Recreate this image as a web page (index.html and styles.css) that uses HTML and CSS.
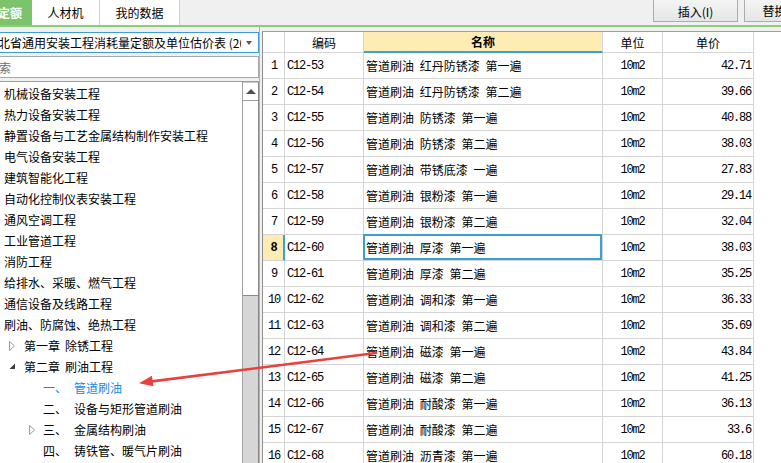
FILE: index.html
```html
<!DOCTYPE html>
<html lang="zh-CN">
<head>
<meta charset="utf-8">
<title>定额</title>
<link rel="stylesheet" href="styles.css">
</head>
<body>
<div class="app">
  <header class="topbar">
    <nav class="tabs">
      <div class="tab active">定额</div>
      <div class="tab tab-rcj">人材机</div>
      <div class="tab tab-my">我的数据</div>
    </nav>
    <div class="actions">
      <button class="btn btn-insert">插入(I)</button>
      <button class="btn btn-replace">替换</button>
    </div>
  </header>
  <main class="main">
    <aside class="left">
      <div class="select">
        <span class="select-text">湖北省通用安装工程消耗量定额及单位估价表 (2013)</span>
        <span class="caret"></span>
      </div>
      <div class="search"><span class="placeholder">搜索</span></div>
      <div class="tree-wrap">
        <ul class="tree">
          <li class="item">机械设备安装工程</li>
          <li class="item">热力设备安装工程</li>
          <li class="item">静置设备与工艺金属结构制作安装工程</li>
          <li class="item">电气设备安装工程</li>
          <li class="item">建筑智能化工程</li>
          <li class="item">自动化控制仪表安装工程</li>
          <li class="item">通风空调工程</li>
          <li class="item">工业管道工程</li>
          <li class="item">消防工程</li>
          <li class="item">给排水、采暖、燃气工程</li>
          <li class="item">通信设备及线路工程</li>
          <li class="item">刷油、防腐蚀、绝热工程</li>
          <li class="item lvl2"><span class="tg"><svg width="7" height="10" viewBox="0 0 7 10"><polygon points="0.5,0.5 5.5,5 0.5,9.5" fill="#fff" stroke="#9a9a9a"/></svg></span><span>第一章</span><span class="gap"></span><span>除锈工程</span></li>
          <li class="item lvl2"><span class="tg"><svg width="7" height="7" viewBox="0 0 7 7"><polygon points="6,0.5 6,6 0.5,6" fill="#3c3c3c"/></svg></span><span>第二章</span><span class="gap"></span><span>刷油工程</span></li>
          <li class="item lvl3 current"><span class="tg"></span><span class="no">一、</span><span>管道刷油</span></li>
          <li class="item lvl3"><span class="tg"></span><span class="no">二、</span><span>设备与矩形管道刷油</span></li>
          <li class="item lvl3"><span class="tg"><svg width="7" height="10" viewBox="0 0 7 10"><polygon points="0.5,0.5 5.5,5 0.5,9.5" fill="#fff" stroke="#9a9a9a"/></svg></span><span class="no">三、</span><span>金属结构刷油</span></li>
          <li class="item lvl3"><span class="tg"></span><span class="no">四、</span><span>铸铁管、暖气片刷油</span></li>
        </ul>
        <div class="scrollbar">
          <div class="sb-up"><span class="sb-arrow"></span></div>
          <div class="sb-thumb"></div>
          <div class="sb-track"></div>
        </div>
      </div>
    </aside>
    <div class="splitter"></div>
    <section class="grid">
      <div class="row head">
        <div class="c num"></div>
        <div class="c code h">编码</div>
        <div class="c name h sorted">名称</div>
        <div class="c unit h">单位</div>
        <div class="c price h">单价</div>
      </div>
      <div class="row"><div class="c num">1</div><div class="c code">C12-53</div><div class="c name">管道刷油 红丹防锈漆 第一遍</div><div class="c unit">10m2</div><div class="c price">42.71</div></div>
      <div class="row"><div class="c num">2</div><div class="c code">C12-54</div><div class="c name">管道刷油 红丹防锈漆 第二遍</div><div class="c unit">10m2</div><div class="c price">39.66</div></div>
      <div class="row"><div class="c num">3</div><div class="c code">C12-55</div><div class="c name">管道刷油 防锈漆 第一遍</div><div class="c unit">10m2</div><div class="c price">40.88</div></div>
      <div class="row"><div class="c num">4</div><div class="c code">C12-56</div><div class="c name">管道刷油 防锈漆 第二遍</div><div class="c unit">10m2</div><div class="c price">38.03</div></div>
      <div class="row"><div class="c num">5</div><div class="c code">C12-57</div><div class="c name">管道刷油 带锈底漆 一遍</div><div class="c unit">10m2</div><div class="c price">27.83</div></div>
      <div class="row"><div class="c num">6</div><div class="c code">C12-58</div><div class="c name">管道刷油 银粉漆 第一遍</div><div class="c unit">10m2</div><div class="c price">29.14</div></div>
      <div class="row"><div class="c num">7</div><div class="c code">C12-59</div><div class="c name">管道刷油 银粉漆 第二遍</div><div class="c unit">10m2</div><div class="c price">32.04</div></div>
      <div class="row selected"><div class="c num">8</div><div class="c code">C12-60</div><div class="c name focus">管道刷油 厚漆 第一遍</div><div class="c unit">10m2</div><div class="c price">38.03</div></div>
      <div class="row"><div class="c num">9</div><div class="c code">C12-61</div><div class="c name">管道刷油 厚漆 第二遍</div><div class="c unit">10m2</div><div class="c price">35.25</div></div>
      <div class="row"><div class="c num">10</div><div class="c code">C12-62</div><div class="c name">管道刷油 调和漆 第一遍</div><div class="c unit">10m2</div><div class="c price">36.33</div></div>
      <div class="row"><div class="c num">11</div><div class="c code">C12-63</div><div class="c name">管道刷油 调和漆 第二遍</div><div class="c unit">10m2</div><div class="c price">35.69</div></div>
      <div class="row"><div class="c num">12</div><div class="c code">C12-64</div><div class="c name">管道刷油 磁漆 第一遍</div><div class="c unit">10m2</div><div class="c price">43.84</div></div>
      <div class="row"><div class="c num">13</div><div class="c code">C12-65</div><div class="c name">管道刷油 磁漆 第二遍</div><div class="c unit">10m2</div><div class="c price">41.25</div></div>
      <div class="row"><div class="c num">14</div><div class="c code">C12-66</div><div class="c name">管道刷油 耐酸漆 第一遍</div><div class="c unit">10m2</div><div class="c price">36.13</div></div>
      <div class="row"><div class="c num">15</div><div class="c code">C12-67</div><div class="c name">管道刷油 耐酸漆 第二遍</div><div class="c unit">10m2</div><div class="c price">33.6</div></div>
      <div class="row"><div class="c num">16</div><div class="c code">C12-68</div><div class="c name">管道刷油 沥青漆 第一遍</div><div class="c unit">10m2</div><div class="c price">60.18</div></div>
    </section>
  </main>
  <svg class="arrow" width="781" height="463" viewBox="0 0 781 463">
    <line x1="150" y1="381.6" x2="376" y2="353" stroke="#e8403c" stroke-width="2.6" stroke-linecap="round"/>
    <polygon points="139,383.2 153.4,386.3 151.9,375.8" fill="#e8403c"/>
  </svg>
</div>
</body>
</html>
```
FILE: styles.css
```css
* { box-sizing: border-box; margin: 0; padding: 0; }
html, body { width: 781px; height: 463px; overflow: hidden; }
body {
  background: #f0f0f0;
  font-family: "Noto Sans CJK SC", "Liberation Sans", sans-serif;
  font-size: 12px;
  color: #000;
}
.app { position: relative; width: 781px; height: 463px; overflow: hidden; }

/* top bar */
.topbar {
  height: 27px;
  display: flex;
  justify-content: space-between;
  border-bottom: 2px solid #8dcc7a;
}
.tabs { display: flex; height: 25px; }
.tab {
  height: 25px;
  line-height: 26px;
  text-align: center;
  background: #fff;
  border-right: 1px solid #bfe0b4;
  white-space: nowrap;
}
.tab.active {
  width: 32px;
  background: #7bc46b;
  color: #fff;
  font-weight: bold;
  text-align: left;
  text-indent: -2px;
  overflow: hidden;
  border-right: none;
}
.tab-rcj { width: 68px; }
.tab-my { width: 80px; }
.actions { display: flex; gap: 6px; margin-right: -24px; }
.btn {
  height: 23px;
  margin-top: -1px;
  font-family: inherit;
  font-size: 12px;
  color: #000;
  background: linear-gradient(#f4f4f4, #e6e6e6);
  border: 1px solid #acacac;
}
.btn-insert { width: 85px; padding-top: 1px; }
.btn-replace { width: 61px; }

/* main */
.main { display: flex; height: 436px; }
.left {
  width: 259px;
  display: flex;
  flex-direction: column;
  padding-top: 5px;
}
.select {
  height: 21px;
  background: #fff;
  border: 1px solid #3d9bd6;
  border-left: none;
  display: flex;
  align-items: center;
  overflow: hidden;
}
.select-text {
  width: 255px;
  overflow: hidden;
  white-space: nowrap;
  margin-left: -14px;
  flex: none;
}
.caret {
  margin-left: 5px;
  width: 0; height: 0;
  border-left: 3.5px solid transparent;
  border-right: 3.5px solid transparent;
  border-top: 4px solid #5a5a5a;
}
.search {
  height: 22px;
  margin-top: 3px;
  background: #fff;
  border: 1px solid #a8a8a8;
  border-left: none;
  display: flex;
  align-items: center;
  overflow: hidden;
}
.placeholder { margin-left: -13px; color: #6d6d6d; white-space: nowrap; }

.tree-wrap {
  flex: 1;
  margin-top: 3px;
  background: #fff;
  border-top: 1px solid #a0a0a0;
  display: flex;
  min-height: 0;
}
.tree { flex: 1; list-style: none; padding-top: 1px; overflow: hidden; }
.item {
  height: 21px;
  line-height: 21px;
  padding-left: 4px;
  white-space: nowrap;
  display: flex;
  align-items: center;
}
.tg { display: flex; align-items: center; width: 15px; flex: none; }
.lvl2 { padding-left: 9px; }
.lvl3 { padding-left: 29px; }
.lvl3 .tg { width: 14px; }
.gap { width: 5px; flex: none; }
.no { width: 31px; flex: none; }
.current { color: #1488e6; }

.scrollbar {
  width: 17px;
  flex: none;
  display: flex;
  flex-direction: column;
  border-left: 1px solid #a0a0a0;
  border-right: 1px solid #888;
}
.sb-up {
  height: 19px;
  border-top: 1px solid #c8c8c8;
  border-bottom: 1px solid #a0a0a0;
  display: flex;
  align-items: center;
  justify-content: center;
}
.sb-arrow {
  width: 0; height: 0;
  border-left: 5px solid transparent;
  border-right: 5px solid transparent;
  border-bottom: 5px solid #505050;
}
.sb-thumb { height: 195px; background: #fff; border-bottom: 1px solid #8a8a8a; }
.sb-track { flex: 1; background: #d6d6d6; }

.splitter { width: 3px; flex: none; border-left: 1px solid #b0b0b0; }

/* grid */
.grid {
  flex: 1;
  margin-top: 4px;
  background: #fff;
  border-top: 1px solid #a0a0a0;
  border-left: 1px solid #8e8e8e;
}
.row {
  display: grid;
  grid-template-columns: 22px 79px 239px 60px 91px;
  height: 26px;
}
.row.head { height: 21px; }
.c {
  border-right: 1px solid #d5d5d5;
  border-bottom: 1px solid #d5d5d5;
  display: flex;
  align-items: center;
  white-space: nowrap;
  overflow: hidden;
}
.num, .code, .unit, .price {
  font-family: "Liberation Mono", "DejaVu Sans Mono", monospace;
  font-size: 12px;
  letter-spacing: -1.2px;
}
.num { justify-content: center; padding-left: 1px; }
.code { padding-left: 2px; }
.name { padding-left: 2px; word-spacing: 3px; }
.unit { justify-content: center; }
.price { justify-content: flex-end; padding-right: 2px; }
.h {
  justify-content: center;
  font-family: "Noto Sans CJK SC", sans-serif;
  letter-spacing: 0;
  padding: 0;
}
.sorted {
  background: #fdedb4;
  font-weight: bold;
  border-bottom: 2px solid #3a9fd5;
}
.selected .num {
  background: #fdedb4;
  font-weight: bold;
  border-right: 2px solid #3a9fd5;
}
.name.focus { position: relative; overflow: visible; }
.name.focus::after {
  content: "";
  position: absolute;
  left: -1px; top: -1px; right: 0; bottom: 0;
  border: 2px solid #3a9fd5;
}

.arrow { position: absolute; left: 0; top: 0; pointer-events: none; }
```
